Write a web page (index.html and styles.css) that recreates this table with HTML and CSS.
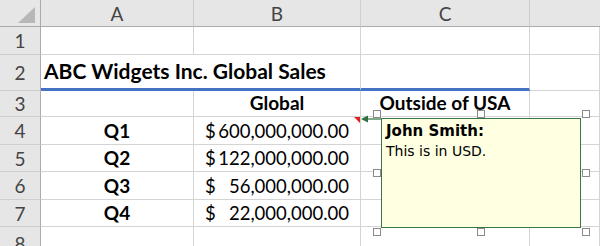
FILE: index.html
```html
<!DOCTYPE html>
<html>
<head>
<meta charset="utf-8">
<link rel="stylesheet" href="styles.css">
</head>
<body>
<div class="wrap">
  <div class="sheet">
    <div class="corner"><svg width="40" height="26" viewBox="0 0 40 26"><polygon points="35,7 35,23 18,23" fill="#b7b7b7"/></svg></div>
    <div class="ch">A</div><div class="ch">B</div><div class="ch">C</div><div class="ch last"></div>

    <div class="rh">1</div><div class="c"></div><div class="c"></div><div class="c"></div><div class="c"></div>

    <div class="rh">2</div><div class="c title blue">ABC Widgets Inc. Global Sales</div><div class="c blue"></div><div class="c"></div>

    <div class="rh">3</div><div class="c"></div><div class="c bold center">Global</div><div class="c bold center">Outside of USA</div><div class="c"></div>

    <div class="rh">4</div><div class="c bold center">Q1</div><div class="c acct"><span>$</span><span>600,000,000.00</span><i class="flag"></i></div><div class="c"></div><div class="c"></div>
    <div class="rh">5</div><div class="c bold center">Q2</div><div class="c acct"><span>$</span><span>122,000,000.00</span></div><div class="c"></div><div class="c"></div>
    <div class="rh">6</div><div class="c bold center">Q3</div><div class="c acct"><span>$</span><span>56,000,000.00</span></div><div class="c"></div><div class="c"></div>
    <div class="rh">7</div><div class="c bold center">Q4</div><div class="c acct"><span>$</span><span>22,000,000.00</span></div><div class="c"></div><div class="c"></div>
    <div class="rh">8</div><div class="c"></div><div class="c"></div><div class="c"></div><div class="c"></div>
  </div>

  <svg class="arrow" width="22" height="8" viewBox="0 0 22 8"><line x1="4" y1="4" x2="22" y2="4" stroke="#2f6f3f" stroke-width="1.2"/><polygon points="0,4 7,0.5 7,7.5" fill="#2f6f3f"/></svg>

  <div class="comment">
    <div class="author">John Smith:</div>
    <div>This is in USD.</div>
  </div>
  <div class="handle h1"></div><div class="handle h2"></div><div class="handle h3"></div>
  <div class="handle h4"></div><div class="handle h5"></div>
  <div class="handle h6"></div><div class="handle h7"></div><div class="handle h8"></div>
</div>
</body>
</html>
```
FILE: styles.css
```css
html, body { margin: 0; padding: 0; background: #fff; }
body { width: 600px; height: 246px; overflow: hidden; }
.wrap { position: relative; width: 600px; height: 246px; overflow: hidden; }
.sheet {
  display: grid;
  grid-template-columns: 41px 153px 167px 169px 1fr;
  grid-template-rows: 27px 28px 36px 26px 28px 27px 28px 27px 1fr;
  height: 260px;
  font-family: Lato, "Liberation Sans", sans-serif;
  font-size: 19px;
  color: #000;
}
.corner, .ch, .rh {
  background: #e6e6e6;
  box-sizing: border-box;
  color: #444;
}
.corner { border-right: 1px solid #ababab; border-bottom: 1px solid #ababab; }
.corner svg { display: block; }
.ch {
  border-bottom: 1px solid #ababab;
  border-right: 1px solid #cfcfcf;
  display: flex; align-items: center; justify-content: center;
  font-size: 19px;
  padding-top: 1px;
}
.ch.last { border-right: none; }
.rh {
  border-right: 1px solid #ababab;
  border-bottom: 1px solid #cfcfcf;
  display: flex; align-items: center; justify-content: center;
  font-size: 19px;
}
.c {
  box-sizing: border-box;
  border-right: 1px solid #d4d4d4;
  border-bottom: 1px solid #d4d4d4;
  display: flex; align-items: flex-end;
  padding: 0 4px 2px;
  white-space: nowrap;
  position: relative;
}
.title {
  grid-column: span 2;
  font-weight: 700;
  font-size: 21px;
  padding-left: 3px;
  padding-bottom: 5px;
}
.blue { border-bottom: 3px solid #4472c4; }
.bold { font-weight: 700; }
.center { justify-content: center; }
.acct { justify-content: space-between; padding: 0 11px 2px 11px; font-size: 18.5px; }
.flag {
  position: absolute; right: 0; top: 0;
  width: 0; height: 0;
  border-top: 6px solid #e0201b;
  border-left: 6px solid transparent;
}
.arrow { position: absolute; left: 361px; top: 115px; }
.comment {
  position: absolute;
  left: 381px; top: 118px;
  width: 200px; height: 110px;
  box-sizing: border-box;
  background: #ffffe1;
  border: 1px solid #3a7546;
  padding: 2px 4px;
  font-family: "DejaVu Sans", Verdana, sans-serif;
  font-size: 14px;
  line-height: 20px;
  color: #000;
}
.author { font-weight: 700; font-size: 15px; }
.handle {
  position: absolute;
  width: 8px; height: 8px;
  box-sizing: border-box;
  background: #fff;
  border: 1px solid #8a8a8a;
}
.h1 { left: 373px; top: 110px; }
.h2 { left: 477px; top: 110px; }
.h3 { left: 582px; top: 110px; }
.h4 { left: 373px; top: 169px; }
.h5 { left: 582px; top: 169px; }
.h6 { left: 373px; top: 228px; }
.h7 { left: 477px; top: 228px; }
.h8 { left: 582px; top: 228px; }
```
